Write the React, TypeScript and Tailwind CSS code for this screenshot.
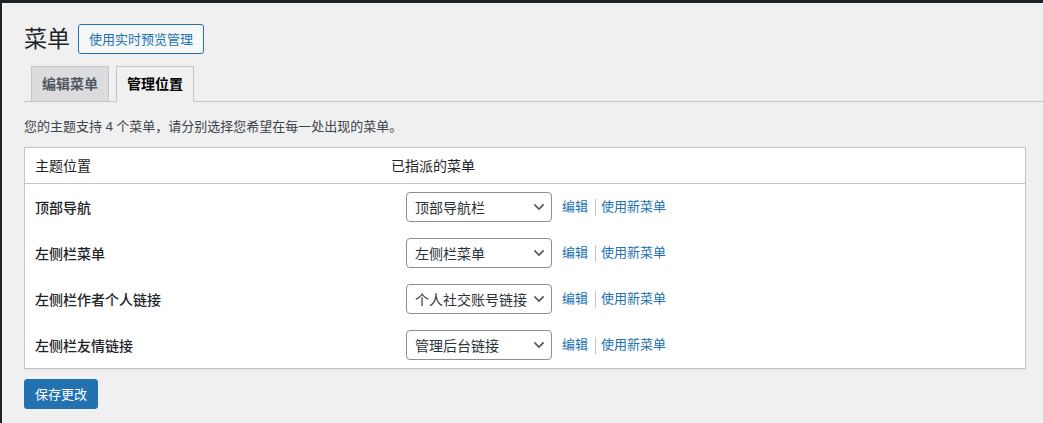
import React from 'react';

const rows = [
  { label: '顶部导航', menu: '顶部导航栏' },
  { label: '左侧栏菜单', menu: '左侧栏菜单' },
  { label: '左侧栏作者个人链接', menu: '个人社交账号链接' },
  { label: '左侧栏友情链接', menu: '管理后台链接' },
];

const Chevron: React.FC = () => (
  <svg width="16" height="16" viewBox="0 0 20 20" className="shrink-0">
    <path d="M5 7.5l5 5 5-5" fill="none" stroke="#50575e" strokeWidth="2.2" strokeLinecap="square" />
  </svg>
);

export default function App() {
  return (
    <div className="flex min-h-[423px] bg-[#f0f0f1] font-['Noto_Sans','Noto_Sans_CJK_SC',sans-serif] text-[13px] text-[#3c434a]">
      <div className="w-[2px] shrink-0 bg-[#1d2327]" />
      <div className="flex-1">
        <div className="h-[3px] bg-[#1d2327]" />

        <div className="flex items-center gap-[8px] pl-[22px] pt-[20px]">
          <h1 className="text-[23px] leading-[31px] font-normal text-[#1d2327]">菜单</h1>
          <button className="h-[30px] rounded-[3px] border border-[#2271b1] bg-[#f6f7f7] px-[10px] text-[13px] leading-[28px] text-[#2271b1]">
            使用实时预览管理
          </button>
        </div>

        <div className="ml-[22px] mt-[12px] flex items-end border-b border-[#c3c4c7] pl-[7px]">
          <div className="-mb-px border border-[#c3c4c7] bg-[#dcdcde] px-[10px] py-[5px] text-[14px] font-semibold leading-[24px] text-[#50575e]">
            编辑菜单
          </div>
          <div className="-mb-px ml-[7px] border border-[#c3c4c7] border-b-[#f0f0f1] bg-[#f0f0f1] px-[10px] py-[5px] text-[14px] font-semibold leading-[24px] text-black">
            管理位置
          </div>
        </div>

        <div className="pl-[22px] pr-[17px]">
          <p className="mt-[14px] leading-[20px]">您的主题支持 4 个菜单，请分别选择您希望在每一处出现的菜单。</p>

          <div className="mt-[11px] border border-[#c3c4c7] bg-white shadow-[0_1px_1px_rgba(0,0,0,0.04)]">
            <div className="grid h-[36px] grid-cols-[356px_1fr] items-center border-b border-[#c3c4c7] text-[14px] text-[#1d2327]">
              <div className="pl-[10px]">主题位置</div>
              <div className="pl-[10px]">已指派的菜单</div>
            </div>
            {rows.map((r) => (
              <div key={r.label} className="grid h-[46px] grid-cols-[356px_1fr] items-center">
                <div className="pl-[10px] text-[14px] font-medium text-[#1d2327]">{r.label}</div>
                <div className="flex items-center pl-[25px]">
                  <div className="flex h-[30px] w-[146px] items-center justify-between rounded-[4px] border border-[#8c8f94] bg-white pl-[8px] pr-[4px] text-[14px] text-[#2c3338]">
                    <span className="whitespace-nowrap">{r.menu}</span>
                    <Chevron />
                  </div>
                  <a className="ml-[10px] text-[#2271b1]">编辑</a>
                  <span className="ml-[7px] mr-[5px] h-[17px] border-l border-[#c3c4c7]" />
                  <a className="text-[#2271b1]">使用新菜单</a>
                </div>
              </div>
            ))}
          </div>

          <button className="mt-[10px] h-[30px] rounded-[3px] border border-[#2271b1] bg-[#2271b1] px-[10px] text-[13px] leading-[28px] text-white">
            保存更改
          </button>
        </div>
      </div>
    </div>
  );
}
